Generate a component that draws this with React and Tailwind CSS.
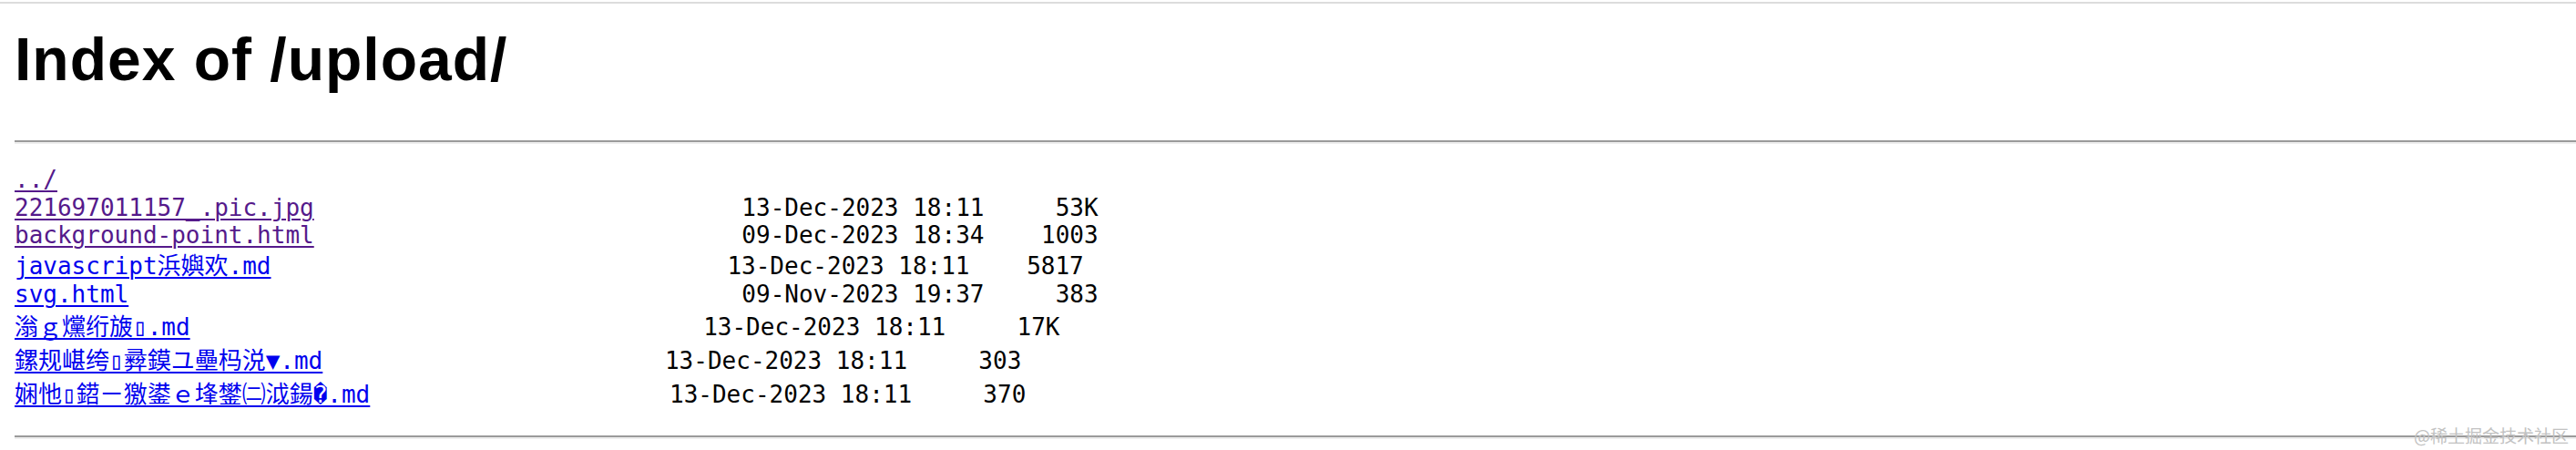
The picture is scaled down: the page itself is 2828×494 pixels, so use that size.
import React from 'react'

const rows = [
  { name: '../', visited: true, h: 'h-[31px]' },
  { name: '221697011157_.pic.jpg', pad: 30, date: '13-Dec-2023 18:11', size: '53K', visited: true, h: 'h-[30px]' },
  { name: 'background-point.html', pad: 30, date: '09-Dec-2023 18:34', size: '1003', visited: true, h: 'h-[34px]' },
  { name: 'javascript浜嬩欢.md', pad: 32, date: '13-Dec-2023 18:11', size: '5817', h: 'h-[31px]' },
  { name: 'svg.html', pad: 43, date: '09-Nov-2023 19:37', size: '383', h: 'h-[36px]' },
  { name: '滃ｇ爣绗旇▯.md', pad: 36, date: '13-Dec-2023 18:11', size: '17K', h: 'h-[37px]' },
  { name: '鏍规嵁绔▯彛鏌ユ壘杩涚▼.md', pad: 24, date: '13-Dec-2023 18:11', size: '303', h: 'h-[37px]' },
  { name: '娴忚▯鍣ㄧ獥鍙ｅ埄鐢㈡泧鍚�.md', pad: 21, date: '13-Dec-2023 18:11', size: '370', h: 'h-[28px]' },
]

export default function App() {
  return (
    <div className="relative min-h-[494px] w-full overflow-hidden bg-white text-black">
      {/* strip at the very top of the capture */}
      <div className="pt-[2px]">
        <div className="h-[2px] bg-[#dcdcdc]" />
      </div>

      <div className="pl-4">
        <h1 className="mt-[24px] text-[66px] font-bold leading-[74px] tracking-[1px] font-['Liberation_Sans',Arial,sans-serif]">
          Index of /upload/
        </h1>
        <hr className="mt-[52px] h-0 border-0 border-t-2 border-b-2 border-t-[#9a9a9a] border-b-[#eeeeee]" />

        <pre className="mt-[25px] whitespace-pre text-[26px] leading-[28px] font-['DejaVu_Sans_Mono','Noto_Sans_CJK_SC',monospace]">
          {rows.map((r) => (
            <div key={r.name} className={r.h}>
              <a
                href="#"
                className={
                  'underline decoration-2 underline-offset-[3px] ' +
                  (r.visited ? 'text-[#551a8b]' : 'text-[#0000ee]')
                }
              >
                {r.name}
              </a>
              {r.date && ' '.repeat(r.pad) + r.date + r.size.padStart(8, ' ')}
            </div>
          ))}
        </pre>

        <hr className="mt-[31px] h-0 border-0 border-t-2 border-b-2 border-t-[#9a9a9a] border-b-[#eeeeee]" />
      </div>

      <div className="absolute right-[8px] top-[468px] text-[19px] leading-none text-[#c2c2c2] font-['Noto_Sans_CJK_SC',sans-serif]">
        @稀土掘金技术社区
      </div>
    </div>
  )
}
